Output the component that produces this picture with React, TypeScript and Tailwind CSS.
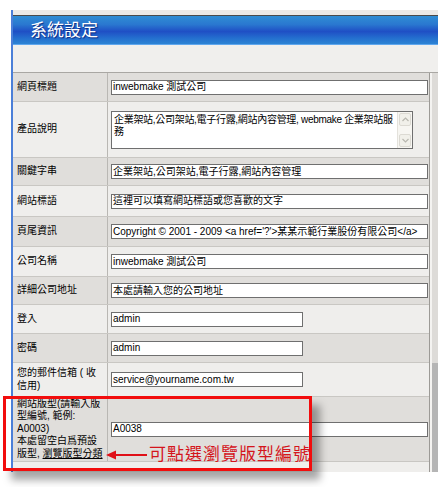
import React from 'react'

const FONT = { fontFamily: '"Liberation Sans", "Noto Sans CJK TC", sans-serif' }

type Row = {
  label: React.ReactNode
  value: string
  h: string
  dark: boolean
  kind?: 'short' | 'area'
}

const ROWS: Row[] = [
  { label: '網頁標題', value: 'inwebmake 測試公司', h: 'h-[29px]', dark: true },
  { label: '產品說明', value: '企業架站,公司架站,電子行露,網站內容管理, webmake 企業架站服\n務', h: 'h-[56px]', dark: false, kind: 'area' },
  { label: '關鍵字串', value: '企業架站,公司架站,電子行露,網站內容管理', h: 'h-[28px]', dark: true },
  { label: '網站標語', value: '這裡可以填寫網站標語或您喜歡的文字', h: 'h-[31px]', dark: false },
  { label: '頁尾資訊', value: "Copyright © 2001 - 2009 <a href='?'>某某示範行業股份有限公司</a>", h: 'h-[30px]', dark: true },
  { label: '公司名稱', value: 'inwebmake 測試公司', h: 'h-[30px]', dark: false },
  { label: '詳細公司地址', value: '本處請輸入您的公司地址', h: 'h-[28px]', dark: true },
  { label: '登入', value: 'admin', h: 'h-[29px]', dark: false, kind: 'short' },
  { label: '密碼', value: 'admin', h: 'h-[29px]', dark: true, kind: 'short' },
  {
    label: (
      <>
        您的郵件信箱 ( 收<br />信用)
      </>
    ),
    value: 'service@yourname.com.tw',
    h: 'h-[34px]',
    dark: false,
    kind: 'short',
  },
  {
    label: (
      <>
        網站版型(請輸入版<br />型編號, 範例:<br />A0003)<br />本處留空白爲預設<br />版型, <span className="underline">瀏覽版型分類</span>
      </>
    ),
    value: 'A0038',
    h: 'h-[65px]',
    dark: true,
  },
]

function Field({ row }: { row: Row }) {
  if (row.kind === 'area') {
    return (
      <div className="flex h-[38px] w-[302px] border border-[#6f6f6f] bg-white">
        <div className="flex-1 whitespace-pre-line pl-[2px] pt-[2px] text-[10px] leading-[12px] tracking-[-0.3px] text-black">{row.value}</div>
        <div className="flex w-[15px] flex-col justify-between border-l border-[#e4e2dc] bg-[#f7f6f2] p-[1px]">
          <div className="flex h-[13px] items-center justify-center rounded-[2px] border border-[#dcdad3] bg-[#f1f0ea]">
            <svg width="7" height="5" viewBox="0 0 7 5"><path d="M0.5 4 L3.5 1 L6.5 4" fill="none" stroke="#b9b8b0" strokeWidth="1.2" /></svg>
          </div>
          <div className="flex h-[13px] items-center justify-center rounded-[2px] border border-[#dcdad3] bg-[#f1f0ea]">
            <svg width="7" height="5" viewBox="0 0 7 5"><path d="M0.5 1 L3.5 4 L6.5 1" fill="none" stroke="#b9b8b0" strokeWidth="1.2" /></svg>
          </div>
        </div>
      </div>
    )
  }
  const w = row.kind === 'short' ? 'w-[192px]' : 'w-[317px]'
  return (
    <div className={`${w} flex h-[15px] items-center overflow-hidden whitespace-nowrap border border-[#6f6f6f] bg-white px-[1px] text-[10px] leading-[12px] text-black`}>
      {row.value}
    </div>
  )
}

export default function App() {
  return (
    <div className="relative h-[487px] w-[446px] overflow-hidden bg-white" style={FONT}>
      <div className="ml-[11px] mt-[10px] flex w-[427px] flex-col border-l-2 border-[#4b7fd8]">
        <div className="h-[5px] bg-[#ebe9e6]" />
        <div className="h-[1px] bg-[#4a4a4a]" />
        <div className="flex h-[28px] items-center bg-[linear-gradient(to_bottom,#2f8dd4_0%,#2a78d0_30%,#1f4fc5_55%,#2470cf_80%,#2d84d4_100%)] pl-[17px]">
          <span className="text-[17px] leading-none text-white [text-shadow:1px_1px_1px_#0a2a80]">系統設定</span>
        </div>
        <div className="h-[1px] bg-[#5fa6ee]" />
        <div className="h-[27px] bg-[#f0efed]" />
        <div className="h-[1px] bg-[#a9a7a3]" />
        <div className="flex">
          <div className="flex w-[417px] flex-col border-r border-[#9c9a96]">
            {ROWS.map((row, i) => (
              <div
                key={i}
                className={`flex ${row.h} items-stretch border-b border-[#c9c7c3] ${row.dark ? 'bg-[#e0dedb]' : 'bg-[#efeeec]'}`}
              >
                <div className="flex w-[95px] items-center border-r border-[#b9b7b3] pl-[4px] text-[10px] leading-[12.5px] text-black">
                  <div className="whitespace-nowrap">{row.label}</div>
                </div>
                <div className="flex flex-1 items-center pl-[3px]">
                  <Field row={row} />
                </div>
              </div>
            ))}
            <div className="h-[10px] bg-[#efeeec]" />
          </div>
          <div className="flex w-[8px] flex-col">
            <div className="h-[290px] border-l-2 border-[#f4f3f1] bg-[#dddbd8]" />
            <div className="flex-1 border-l-2 border-[#f4f3f1] bg-[#b5b5b5]" />
          </div>
        </div>
      </div>

      <div className="absolute left-[3px] top-[396px] h-[75px] w-[309px] border-[3px] border-[#f20d0d] shadow-[8px_9px_8px_rgba(0,0,0,0.35)]" />

      <div className="absolute left-[106px] top-[445px] flex items-center">
        <svg width="42" height="12" viewBox="0 0 42 12">
          <path d="M2 6 H41" stroke="#e01018" strokeWidth="2" />
          <path d="M0 6 L10 1.5 L10 10.5 Z" fill="#e01018" />
        </svg>
        <span
          className="ml-[1px] text-[17px] leading-[20px] tracking-[1px] text-[#d4151c]"
          style={{ fontFamily: '"Liberation Serif", "Noto Sans CJK TC", serif' }}
        >
          可點選瀏覽版型編號
        </span>
      </div>
    </div>
  )
}
